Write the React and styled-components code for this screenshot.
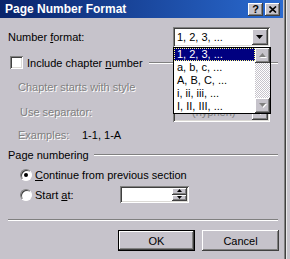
import React from 'react';
import styled, { createGlobalStyle, css } from 'styled-components';

const BG = '#c6c3cb';

const Global = createGlobalStyle`
  html, body { margin: 0; padding: 0; }
  body {
    width: 290px; height: 259px; overflow: hidden;
    background: ${BG};
    font-family: "Liberation Sans", Arial, sans-serif;
    font-size: 11px; color: #000;
  }
`;

const Screen = styled.div`
  display: flex;
  width: 290px;
  height: 259px;
`;

const Dialog = styled.div`
  position: relative;
  box-sizing: border-box;
  width: 286px;
  height: 259px;
  padding-right: 2px;
  display: flex;
  flex-direction: column;
  background: ${BG};
  border-right: 1px solid #404040;
  box-shadow: inset -1px 0 #808080;
`;

const Strip = styled.div`
  flex: 1;
  background: ${BG};
  border-left: 1px solid #e8e8e8;
`;

const TitleBar = styled.div`
  height: 18px;
  display: flex;
  align-items: center;
  padding: 0 3px 0 5px;
  background: linear-gradient(to right, #0a246a, #2a6ad0);
  color: #fff;
  font-weight: bold;
  font-size: 12px;
`;

const TitleText = styled.span`
  flex: 1;
  white-space: nowrap;
`;

const raised = css`
  box-shadow: inset -1px -1px #404040, inset 1px 1px #fff,
    inset -2px -2px #808080, inset 2px 2px ${BG};
`;

const sunken = css`
  box-shadow: inset 1px 1px #808080, inset -1px -1px #fff,
    inset 2px 2px #404040, inset -2px -2px #dcdad6;
`;

const CapButton = styled.div`
  width: 15px;
  height: 13px;
  margin-left: ${(p) => p.$ml || 0}px;
  background: ${BG};
  ${raised};
  display: flex;
  align-items: center;
  justify-content: center;
  color: #000;
  font-size: 11px;
  font-weight: bold;
  line-height: 1;
`;

const Body = styled.div`
  display: flex;
  flex-direction: column;
`;

const Row = styled.div`
  height: ${(p) => p.$h}px;
  margin-top: ${(p) => p.$mt}px;
  padding-left: ${(p) => p.$pl || 0}px;
  padding-right: ${(p) => p.$pr || 0}px;
  display: ${(p) => (p.$cols ? 'grid' : 'flex')};
  grid-template-columns: ${(p) => p.$cols || 'none'};
  align-items: center;
  white-space: nowrap;
`;

const Label = styled.span`
  padding-left: ${(p) => p.$pl || 0}px;
  margin-left: ${(p) => p.$ml || 0}px;
  ${(p) =>
    p.$disabled &&
    css`
      color: #808080;
      text-shadow: 1px 1px 0 #fff;
    `}
`;

const Combo = styled.div`
  position: relative;
  box-sizing: border-box;
  width: 97px;
  height: 20px;
  background: ${(p) => (p.$disabled ? BG : '#fff')};
  color: ${(p) => (p.$disabled ? '#808080' : '#000')};
  ${sunken};
  display: flex;
  align-items: center;
  padding: 2px 2px 2px 4px;
`;

const ComboText = styled.span`
  flex: 1;
`;

const DropButton = styled.div`
  width: 16px;
  height: 16px;
  background: ${BG};
  ${raised};
  display: flex;
  align-items: center;
  justify-content: center;
`;

const GroupLine = styled.div`
  flex: 1;
  height: 0;
  border-top: 1px solid #808080;
  border-bottom: 1px solid #fff;
  margin-left: ${(p) => p.$ml || 0}px;
`;

const Check = styled.span`
  box-sizing: border-box;
  width: 13px;
  height: 13px;
  background: #fff;
  ${sunken};
`;

const Radio = styled.span`
  position: relative;
  box-sizing: border-box;
  width: 12px;
  height: 12px;
  border-radius: 50%;
  background: #fff;
  border: 1px solid;
  border-color: #808080 #fff #fff #808080;
  box-shadow: inset 1px 1px #404040;
  ${(p) =>
    p.$checked &&
    css`
      &::after {
        content: '';
        position: absolute;
        left: 3px;
        top: 3px;
        width: 4px;
        height: 4px;
        border-radius: 50%;
        background: #000;
      }
    `}
`;

const Spin = styled.div`
  box-sizing: border-box;
  width: 69px;
  height: 17px;
  background: #fff;
  ${sunken};
  display: flex;
  justify-content: flex-end;
  padding: 2px;
`;

const SpinButtons = styled.div`
  width: 15px;
  display: flex;
  flex-direction: column;
`;

const SpinHalf = styled.div`
  flex: 1;
  background: ${BG};
  ${raised};
  display: flex;
  align-items: center;
  justify-content: center;
`;

const Separator = styled.div`
  height: 0;
  margin: 16px 5px 0 8px;
  border-top: 1px solid #808080;
  border-bottom: 1px solid #fff;
`;

const ButtonRow = styled.div`
  display: flex;
  gap: 7px;
  margin-top: 9px;
  padding-left: 118px;
`;

const PushButton = styled.div`
  box-sizing: border-box;
  width: 77px;
  height: 21px;
  display: flex;
  align-items: center;
  justify-content: center;
  background: ${BG};
  ${(p) =>
    p.$default
      ? css`
          border: 1px solid #000;
          box-shadow: inset -1px -1px #404040, inset 1px 1px #fff,
            inset -2px -2px #808080;
        `
      : raised};
`;

const ListBox = styled.div`
  position: absolute;
  left: 173px;
  top: 47px;
  box-sizing: border-box;
  width: 98px;
  height: 67px;
  border: 1px solid #000;
  background: #fff;
  display: flex;
`;

const Items = styled.div`
  flex: 1;
  display: flex;
  flex-direction: column;
`;

const Item = styled.div`
  box-sizing: border-box;
  height: 13px;
  line-height: 13px;
  padding-left: 3px;
  white-space: nowrap;
  ${(p) =>
    p.$selected &&
    css`
      background: #000080;
      color: #fff;
      outline: 1px dotted #ffff80;
      outline-offset: -1px;
    `}
`;

const ScrollBar = styled.div`
  width: 15px;
  display: flex;
  flex-direction: column;
`;

const ScrollBtn = styled.div`
  height: 15px;
  background: ${BG};
  ${raised};
  display: flex;
  align-items: center;
  justify-content: center;
`;

const Track = styled.div`
  flex: 1;
  background: repeating-conic-gradient(#fff 0 25%, #c6c3cb 0 50%) 0 0 / 2px 2px;
`;

const Arrow = ({ up, disabled, w = 7 }) => {
  const h = Math.ceil(w / 2);
  const pts = up
    ? `0,${h} ${w},${h} ${w / 2},0`
    : `0,0 ${w},0 ${w / 2},${h}`;
  return (
    <svg width={w + 1} height={h + 1} viewBox={`0 0 ${w + 1} ${h + 1}`} style={{ display: 'block' }}>
      {disabled && <polygon points={pts} fill="#fff" transform="translate(1,1)" />}
      <polygon points={pts} fill={disabled ? '#808080' : '#000'} />
    </svg>
  );
};

const CloseGlyph = () => (
  <svg width="8" height="7" viewBox="0 0 8 7" style={{ display: 'block' }}>
    <path d="M0.5 0.5 L7 6.5 M7 0.5 L0.5 6.5" stroke="#000" strokeWidth="1.6" />
  </svg>
);

export default function App() {
  return (
    <>
      <Global />
      <Screen>
        <Dialog>
          <TitleBar>
            <TitleText>Page Number Format</TitleText>
            <CapButton>?</CapButton>
            <CapButton $ml={2}>
              <CloseGlyph />
            </CapButton>
          </TitleBar>
          <Body>
            <Row $h={20} $mt={9} $cols="173px 97px">
              <Label $pl={8}>
                Number <u>f</u>ormat:
              </Label>
              <Combo>
                <ComboText>1, 2, 3, ...</ComboText>
                <DropButton>
                  <Arrow />
                </DropButton>
              </Combo>
            </Row>
            <Row $h={13} $mt={9} $pl={10} $pr={5}>
              <Check />
              <Label $ml={4}>
                Include chapter <u>n</u>umber
              </Label>
              <GroupLine $ml={6} />
            </Row>
            <Row $h={20} $mt={8} $cols="173px 97px">
              <Label $pl={18} $disabled>
                Chapter starts with style
              </Label>
              <Combo $disabled>
                <ComboText />
                <DropButton>
                  <Arrow disabled />
                </DropButton>
              </Combo>
            </Row>
            <Row $h={20} $mt={5} $cols="173px 97px">
              <Label $pl={20} $disabled>
                Use separator:
              </Label>
              <Combo $disabled>
                <ComboText>
                  <Label $ml={15}>(hyphen)</Label>
                </ComboText>
                <DropButton>
                  <Arrow disabled />
                </DropButton>
              </Combo>
            </Row>
            <Row $h={14} $mt={6} $cols="82px auto">
              <Label $pl={18} $disabled>
                Examples:
              </Label>
              <Label>1-1, 1-A</Label>
            </Row>
            <Row $h={14} $mt={6} $pl={8} $pr={5}>
              <Label>Page numbering</Label>
              <GroupLine $ml={5} />
            </Row>
            <Row $h={14} $mt={6} $pl={20}>
              <Radio $checked />
              <Label $ml={3}>
                <u>C</u>ontinue from previous section
              </Label>
            </Row>
            <Row $h={17} $mt={4} $cols="120px 69px">
              <Row $h={17} $mt={0} $pl={20}>
                <Radio />
                <Label $ml={3}>
                  Start <u>a</u>t:
                </Label>
              </Row>
              <Spin>
                <SpinButtons>
                  <SpinHalf>
                    <Arrow up w={5} />
                  </SpinHalf>
                  <SpinHalf>
                    <Arrow w={5} />
                  </SpinHalf>
                </SpinButtons>
              </Spin>
            </Row>
            <Separator />
            <ButtonRow>
              <PushButton $default>OK</PushButton>
              <PushButton>Cancel</PushButton>
            </ButtonRow>
          </Body>
          <ListBox>
            <Items>
              <Item $selected>1, 2, 3, ...</Item>
              <Item>a, b, c, ...</Item>
              <Item>A, B, C, ...</Item>
              <Item>i, ii, iii, ...</Item>
              <Item>I, II, III, ...</Item>
            </Items>
            <ScrollBar>
              <ScrollBtn>
                <Arrow up disabled />
              </ScrollBtn>
              <Track />
              <ScrollBtn>
                <Arrow disabled />
              </ScrollBtn>
            </ScrollBar>
          </ListBox>
        </Dialog>
        <Strip />
      </Screen>
    </>
  );
}
